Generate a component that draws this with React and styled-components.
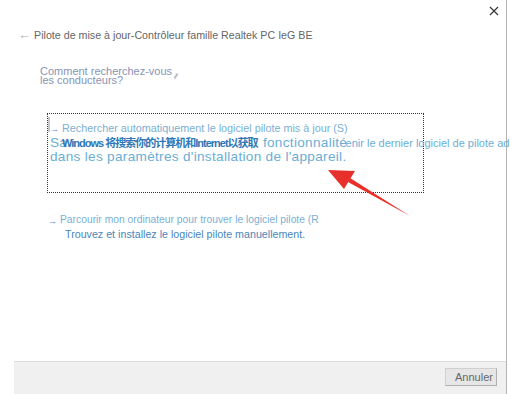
import React from "react";
import styled, { createGlobalStyle } from "styled-components";

const Global = createGlobalStyle`
  html, body { margin: 0; padding: 0; background: #fff; }
  body { font-family: "Liberation Sans", Arial, sans-serif; overflow: hidden; }
`;

const Screen = styled.div`
  width: 510px;
  height: 394px;
  display: flex;
  background: #fff;
  overflow: hidden;
`;

const Window = styled.div`
  width: 506px;
  height: 394px;
  border-right: 1px solid #b4b4b4;
  display: flex;
  flex-direction: column;
  position: relative;
`;

const TopBar = styled.div`
  height: 20px;
  display: flex;
  justify-content: flex-end;
  align-items: center;
  padding-right: 7px;
`;

const CloseBtn = styled.button`
  border: 0;
  background: none;
  padding: 0;
  width: 10px;
  height: 10px;
  display: flex;
  margin-top: 1px;
`;

const TitleRow = styled.div`
  display: flex;
  align-items: center;
  gap: 3px;
  padding: 7px 0 0 18px;
  height: 16px;
  font-size: 10.7px;
  color: #666;
`;

const BackArrow = styled.span`
  color: #b0b0b0;
  font-size: 13px;
  margin-top: -1px;
`;

const Heading = styled.div`
  margin: 24px 0 0 40px;
  font-size: 11px;
  line-height: 9px;
  color: #8794b4;
  position: relative;
  width: 140px;
`;

const Tick = styled.span`
  position: absolute;
  left: 135px;
  top: 6px;
  width: 2px;
  height: 6px;
  background: #b8bcc8;
  transform: rotate(30deg);
`;

const OptionBox = styled.div`
  margin: 28px 0 0 47px;
  width: 377px;
  height: 80px;
  border: 1px dotted #333;
  position: relative;
  box-sizing: border-box;
`;

const FocusBar = styled.span`
  position: absolute;
  left: 0;
  top: 3px;
  width: 2px;
  height: 15px;
  background: #c8c8c8;
`;

const OptionTitle = styled.div`
  display: flex;
  gap: 3px;
  align-items: center;
  font-size: ${(p) => p.$size}px;
  color: #7ab0d4;
  padding-left: ${(p) => p.$pad}px;
  white-space: nowrap;
`;

const SmallArrow = styled.span`
  font-size: 9px;
  color: #5d8fbf;
  margin-top: 3px;
`;

const BigDesc = styled.div`
  position: relative;
  margin-top: 2px;
  padding-left: 2px;
  font-size: 13.6px;
  line-height: 14px;
  letter-spacing: 0.3px;
  color: #6aaed4;
  white-space: pre;
`;

const Overlay = styled.div`
  position: absolute;
  left: 14px;
  top: 1px;
  font-size: 11px;
  line-height: 12px;
  white-space: nowrap;
  color: #6aaed4;
  letter-spacing: 0;
`;

const Dark = styled.span`
  color: #2e78b8;
  font-weight: bold;
  font-family: "Liberation Sans", "Noto Sans CJK SC", sans-serif;
  letter-spacing: -1px;
`;

const Option2 = styled.div`
  margin: 20px 0 0 47px;
  display: flex;
  flex-direction: column;
  gap: 2px;
`;

const Desc2 = styled.div`
  padding-left: 18px;
  font-size: 10.7px;
  color: #4a86ba;
`;

const Spacer = styled.div`
  flex: 1;
`;

const Footer = styled.div`
  margin-left: 14px;
  height: 33px;
  background: #f0f0f0;
  border-top: 1px solid #dcdcdc;
  display: flex;
  justify-content: flex-end;
  align-items: flex-start;
  padding: 6px 9px 0 0;
  box-sizing: border-box;
`;

const CancelBtn = styled.button`
  width: 52px;
  height: 18px;
  border: 1px solid #b0b0b0;
  border-left-color: #d0d0d0;
  border-top-color: #d0d0d0;
  background: #e6e6e6;
  color: #666;
  font-family: "Liberation Sans", Arial, sans-serif;
  font-size: 11px;
  padding: 0 0 0 9px;
  text-align: left;
`;

const RedArrow = styled.svg`
  position: absolute;
  left: 320px;
  top: 160px;
`;

export default function App() {
  return (
    <Screen>
      <Global />
      <Window>
        <TopBar>
          <CloseBtn aria-label="Fermer">
            <svg width="10" height="10" viewBox="0 0 10 10">
              <path d="M1 1 L9 9 M9 1 L1 9" stroke="#333" strokeWidth="1.1" />
            </svg>
          </CloseBtn>
        </TopBar>
        <TitleRow>
          <BackArrow>←</BackArrow>
          <span>Pilote de mise à jour-Contrôleur famille Realtek PC IeG BE</span>
        </TitleRow>
        <Heading>
          Comment recherchez-vous
          <br />
          les conducteurs?
          <Tick />
        </Heading>
        <OptionBox>
          <FocusBar />
          <OptionTitle $size={10.8} $pad={2} style={{ marginTop: 7 }}>
            <SmallArrow>→</SmallArrow>
            <span>Rechercher automatiquement le logiciel pilote mis à jour (S)</span>
          </OptionTitle>
          <BigDesc>
            {"Sa                                                fonctionnalité\ndans les paramètres d'installation de l'appareil."}
            <Overlay>
              <Dark>Windows 将搜索你的计算机和Internet以获取</Dark>
              <span style={{ marginLeft: 88 }}>enir le dernier logiciel de pilote adapté à votre appareil</span>
            </Overlay>
          </BigDesc>
        </OptionBox>
        <Option2>
          <OptionTitle $size={10.3} $pad={1}>
            <SmallArrow>→</SmallArrow>
            <span>Parcourir mon ordinateur pour trouver le logiciel pilote (R</span>
          </OptionTitle>
          <Desc2>Trouvez et installez le logiciel pilote manuellement.</Desc2>
        </Option2>
        <Spacer />
        <Footer>
          <CancelBtn>Annuler</CancelBtn>
        </Footer>
        <RedArrow width="100" height="64" viewBox="0 0 100 64">
          <path d="M90 56 L28 22 L30 18 Z" fill="#e8302a" />
          <path d="M8 10 L35 11 L24 29 Z" fill="#e8302a" />
        </RedArrow>
      </Window>
    </Screen>
  );
}
